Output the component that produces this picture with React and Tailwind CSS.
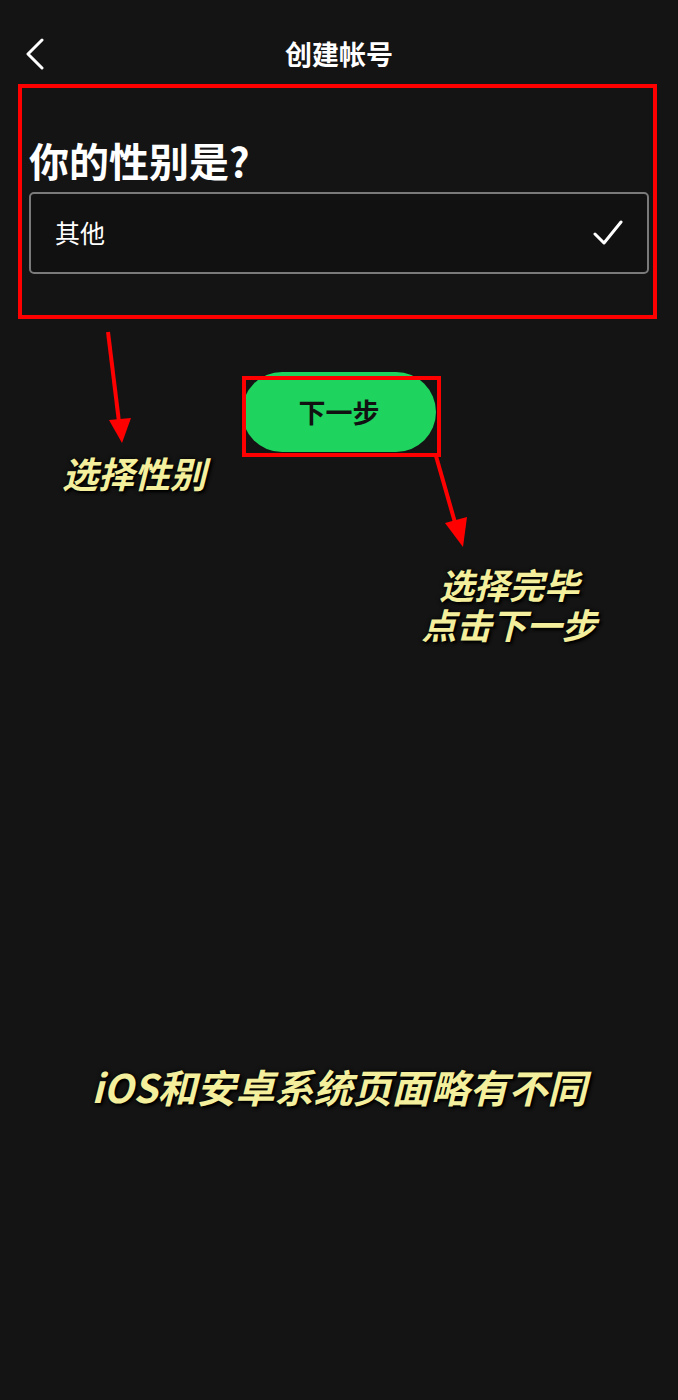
export default function App() {
  const cjk = { fontFamily: '"Noto Sans CJK SC", "Noto Sans", sans-serif' };
  const note = "absolute italic font-semibold text-[#f4ef9c] [text-shadow:0_0_4px_#000,2px_2px_3px_#000]";

  return (
    <div className="relative w-[678px] h-[1400px] bg-[#141414] text-white overflow-hidden" style={cjk}>
      {/* header */}
      <div className="relative h-[108px] flex items-center justify-center">
        <button className="absolute left-[22px] top-[36px] w-[26px] h-[36px] flex items-center justify-center">
          <svg width="20" height="32" viewBox="0 0 20 32" fill="none">
            <path d="M17 2 L3 16 L17 30" stroke="white" strokeWidth="3" strokeLinecap="round" strokeLinejoin="round" />
          </svg>
        </button>
        <h1 className="text-[27px] font-semibold">创建帐号</h1>
      </div>

      {/* question */}
      <div className="px-[29px]">
        <h2 className="text-[40px] leading-[48px] font-bold mt-[28px]">你的性别是?</h2>
        <div className="mt-[8px] h-[82px] rounded-[5px] border-2 border-[#7a7a7a] bg-[#111111] flex items-center justify-between px-[24px]">
          <span className="text-[25px]">其他</span>
          <svg width="30" height="26" viewBox="0 0 30 26" fill="none">
            <path d="M2 14 L11 23 L28 2" stroke="white" strokeWidth="3" strokeLinecap="round" strokeLinejoin="round" />
          </svg>
        </div>
      </div>

      <div className="flex justify-center mt-[98px]">
        <button className="w-[194px] h-[80px] rounded-full bg-[#1fd35f] text-[#111] text-[27px] font-bold">下一步</button>
      </div>

      {/* annotations */}
      <div className="absolute left-[18px] top-[84px] w-[639px] h-[235px] border-[4px] border-[#ff0000] pointer-events-none" />
      <div className="absolute left-[242px] top-[376px] w-[199px] h-[81px] border-[4px] border-[#ff0000] pointer-events-none" />

      <svg className="absolute left-0 top-0 pointer-events-none" width="678" height="700" viewBox="0 0 678 700">
        <line x1="108" y1="332" x2="119" y2="422" stroke="#ff0000" strokeWidth="4" />
        <polygon points="109,420 131,418 122,443" fill="#ff0000" />
        <line x1="436" y1="456" x2="456" y2="526" stroke="#ff0000" strokeWidth="4" />
        <polygon points="445,523 467,517 463,547" fill="#ff0000" />
      </svg>

      <div className={`${note} left-[62px] top-[450px] text-[36px] leading-[44px]`}>选择性别</div>
      <div className={`${note} left-[409px] top-[564px] w-[200px] flex flex-col items-center text-[35px] leading-[40px]`}>
        <span>选择完毕</span>
        <span>点击下一步</span>
      </div>
      <div className={`${note} left-0 top-[1062px] w-[678px] text-center text-[39px] leading-[48px]`}>
        iOS和安卓系统页面略有不同
      </div>
    </div>
  );
}
